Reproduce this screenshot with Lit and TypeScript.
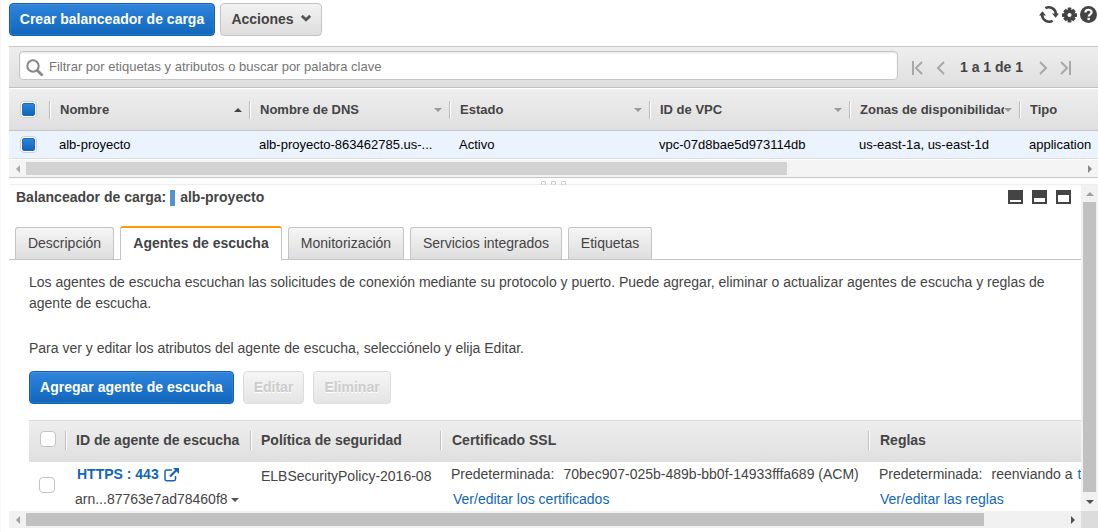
import { LitElement, html, css, svg } from "lit";
import { customElement } from "lit/decorators.js";

const columns = [
  { label: "Nombre", cell: "alb-proyecto", width: 200, sort: "up" },
  { label: "Nombre de DNS", cell: "alb-proyecto-863462785.us-...", width: 200, sort: "down" },
  { label: "Estado", cell: "Activo", width: 200, sort: "down" },
  { label: "ID de VPC", cell: "vpc-07d8bae5d973114db", width: 200, sort: "down" },
  { label: "Zonas de disponibilidad", cell: "us-east-1a, us-east-1d", width: 170, sort: "down" },
  { label: "Tipo", cell: "application", width: 79, sort: "" },
];

const chevron = (d: string) => html`<svg width="12" height="14" viewBox="0 0 12 14"><path d=${d} fill="none" stroke="#a8a8a8" stroke-width="2"/></svg>`;

@customElement("app-root")
export class AppRoot extends LitElement {
  static styles = css`
    :host { display: block; width: 1098px; height: 532px; overflow: hidden; background: #fff; color: #444;
      font: 14px/21px "Liberation Sans", Arial, sans-serif; }
    * { box-sizing: border-box; }
    svg { display: block; flex: none; }
    .page { height: 532px; padding-left: 8px; border-left: 1px solid #f7f7f7; display: flex; flex-direction: column; }
    .toolbar { height: 46px; flex: none; display: flex; align-items: flex-start; padding-top: 3px; }
    .btn { height: 33px; border-radius: 4px; border: 1px solid #c3c3c3; display: flex; align-items: center; justify-content: center;
      font-weight: bold; font-size: 14px; white-space: nowrap; color: #444; background: linear-gradient(#f2f2f2, #dedede); }
    .btn.primary { color: #fff; border-color: #1361ad; background: linear-gradient(#2e85dc, #1166bb);
      box-shadow: inset 0 1px 0 #4690dc, inset 0 0 0 1px rgba(60,140,220,.4); }
    .btn.off { color: #ccc; border-color: #dcdcdc; background: linear-gradient(#f5f5f5, #e5e5e5); text-shadow: 0 1px 0 #fff; }
    .create { width: 206px; margin-right: 5px; }
    .actions { width: 102px; gap: 7px; padding-bottom: 1px; }
    .actions svg { margin-bottom: 2px; }
    .tools { margin-left: auto; display: flex; align-items: center; gap: 3px; padding: 2px 1px 0 0; }
    .filter { height: 42px; flex: none; border-top: 1px solid #c6c6c6; border-bottom: 1px solid #c1c1c1; background: linear-gradient(#eee, #dfdfdf);
      display: flex; padding: 4px 0 0 10px; }
    .search { width: 879px; height: 29px; border: 1px solid #c6c6c6; border-radius: 4px; background: #fff; display: flex; align-items: center;
      padding: 1px 0 0 6px; gap: 5px; font-size: 13px; color: #757575; box-shadow: inset 0 1px 2px #e5e5e5; }
    .search svg { margin-top: 3px; }
    .pager { display: flex; align-items: center; height: 33px; padding-left: 13px; font-weight: bold; font-size: 14px; }
    .pager .prev { margin-left: 11px; margin-right: 14px; }
    .pager .next { margin-left: 14px; margin-right: 11px; }
    .thead { height: 43px; flex: none; border-top: 1px solid #fff; border-bottom: 1px solid #c6c6c6;
      background: linear-gradient(#eee, #dfdfdf); display: flex; align-items: center; }
    .check { width: 40px; flex: none; padding-left: 11px; display: flex; }
    .box { width: 16px; height: 16px; border: 1px solid #c4c4c4; border-radius: 4px; background: #fff; display: flex; padding: 1px; }
    .box.on { width: 17px; height: 17px; border-color: #d0d0d0; }
    .box.on::before { content: ""; flex: 1; border-radius: 2px; background: linear-gradient(#2e85dc, #1166bb); border: 1px solid #1a6cb8; }
    .thead .check, .row .check { padding-left: 11px; }
    .th { height: 18px; flex: none; display: flex; align-items: center; border-left: 1px solid #bbb; box-shadow: inset 1px 0 #fff;
      padding: 0 7px 0 10px; font-size: 13px; font-weight: bold; white-space: nowrap; }
    .th .label { flex: 1; min-width: 0; overflow: hidden; padding-bottom: 1px; }
    .row { height: 28px; flex: none; border-bottom: 1px solid #ddd; background: #eaf3fe; display: flex; align-items: center; color: #000; font-size: 13px; }
    .td { flex: none; padding: 0 0 1px 10px; white-space: nowrap; }
    .hbar { display: flex; align-items: center; flex: none; background: #f1f1f1; }
    .hbar.top { height: 19px; border-bottom: 1px solid #c6c6c6; border-top: 1px solid #fff; background: #f4f4f4; }
    .thumb { height: 13px; background: #c1c1c1; }
    .cap { width: 17px; flex: none; display: flex; justify-content: center; }
    .top .thumb { background: #d2d2d2; width: 761px; }
    .bottom { height: 17px; width: 1072px; }
    .bottom .thumb { width: 958px; }
    .hbar .cap:last-child { margin-left: auto; }
    .corner { width: 17px; height: 17px; background: #dcdcdc; }
    .splitter { height: 7px; flex: none; border-bottom: 1px solid #eee; display: flex; justify-content: center; align-items: flex-end; gap: 5px; }
    .dot { width: 5px; height: 4px; border: 1px solid #c8c8c8; border-bottom-color: #ddd; border-radius: 2px 2px 0 0; margin-bottom: -1px; }
    .lower { flex: none; height: 326px; display: flex; }
    .detail { width: 1072px; overflow: hidden; display: flex; flex-direction: column; }
    .vbar { width: 17px; background: #f1f1f1; display: flex; flex-direction: column; align-items: center; }
    .vcap { height: 17px; display: flex; align-items: center; }
    .vthumb { width: 13px; height: 290px; background: #c1c1c1; margin-bottom: 1px; }
    .titlebar { height: 25px; flex: none; display: flex; align-items: center; padding-left: 7px; font-weight: bold; }
    .mark { width: 5px; height: 16px; background: #4f94d0; margin: 0 5px 0 4px; }
    .panes { margin-left: auto; display: flex; gap: 9px; padding: 0 10px 1px 0; }
    .tabs { height: 50px; flex: none; display: flex; align-items: flex-end; border-bottom: 1px solid #c4c4c4; padding-left: 6px; gap: 6px; }
    .tab { height: 32px; border: 1px solid #c4c4c4; border-bottom: 0; border-radius: 3px 3px 0 0; background: linear-gradient(#f5f5f5, #dedede);
      display: flex; align-items: center; justify-content: center; white-space: nowrap; }
    .tab.sel { height: 34px; margin-bottom: -1px; background: #fff; border-top: 2px solid #f90; font-weight: bold; padding-bottom: 1px; }
    .t1 { width: 99px; } .t2 { width: 162px; } .t3 { width: 116px; } .t4 { width: 152px; } .t5 { width: 84px; }
    .copy { padding: 12px 20px 0; height: 111px; flex: none; }
    .copy p { margin: 0; white-space: nowrap; }
    .copy p + p { margin-top: 24px; }
    .acts { flex: none; display: flex; padding-left: 20px; height: 49px; }
    .add { width: 205px; margin-right: 9px; } .edit { width: 61px; margin-right: 9px; } .del { width: 78px; }
    .lhead, .lrow { margin-left: 20px; width: 1052px; display: flex; flex: none; }
    .lhead { height: 42px; border-top: 1px solid #d8d8d8; background: linear-gradient(#eee, #dfdfdf); align-items: center; font-weight: bold; padding-bottom: 2px; }
    .lhead .check { width: 36px; padding-bottom: 4px; } .lrow .check { width: 36px; padding: 15px 0 0 10px; }
    .lh { height: 19px; line-height: 19px; flex: none; border-left: 1px solid #c0c0c0; box-shadow: inset 1px 0 #fff; padding-left: 11px; white-space: nowrap; }
    .lh.w1 { padding-left: 10px; } .lh.w2 { padding-left: 10px; }
    .lrow { height: 49px; }
    .lc { flex: none; padding-left: 11px; white-space: nowrap; overflow: hidden; }
    .lc.w1 { padding-left: 10px; }
    .w1 { width: 185px; } .w2 { width: 190px; } .w3 { width: 428px; } .w4 { width: 213px; }
    .ln { height: 25px; display: flex; align-items: center; }
    .pol { padding-top: 4px; }
    .blue { color: #1166bb; }
    .ind { padding-left: 2px; }
    .ind1 { padding-left: 1px; }
    .gap { width: 9px; flex: none; }
    .gap.sm { width: 5px; }
  `;

  private arrow(dir: string, color: string) {
    const d: Record<string, string> = { up: "M0 5L4 1L8 5Z", down: "M0 1L4 5L8 1Z", left: "M6 0V8L2 4Z", right: "M2 0V8L6 4Z" };
    const flat = dir === "up" || dir === "down";
    return html`<svg width="8" height=${flat ? 6 : 8} viewBox="0 0 8 ${flat ? 6 : 8}"><path d=${d[dir]} fill=${color}/></svg>`;
  }

  private pane(y: number) {
    return html`<svg width="15" height="14"><path d="M0 0H15V14H0Z" fill="#444"/>${svg`<rect x="2" y=${y} width="11" height=${12 - y} fill="#fff"/>`}</svg>`;
  }

  render() {
    return html`<div class="page">
      <div class="toolbar">
        <div class="btn primary create">Crear balanceador de carga</div>
        <div class="btn actions"><span>Acciones</span>
          <svg width="10" height="7" viewBox="0 0 10 7"><path d="M0.8 0.8L5 4.8L9.2 0.8" fill="none" stroke="#555" stroke-width="2.8"/></svg></div>
        <div class="tools">
          <svg width="20" height="19" viewBox="0 0 20 19"><g fill="none" stroke="#444" stroke-width="2.6"><path d="M6.4 3.1A7.3 7.3 0 0 1 17 9"/><path d="M13.6 15.9A7.3 7.3 0 0 1 3 10"/></g><path d="M13 8.4H20L16.7 12.8ZM0 10.6H7L3.3 6.2Z" fill="#444"/></svg>
          <svg width="15" height="16" viewBox="0 0 16 16"><g fill="#444"><rect x="6" y="0" width="4" height="16" rx=".6"/><rect x="0" y="6" width="16" height="4" rx=".6"/><rect x="6" y="0.4" width="4" height="15.2" rx=".6" transform="rotate(45 8 8)"/><rect x="6" y="0.4" width="4" height="15.2" rx=".6" transform="rotate(-45 8 8)"/></g><circle cx="8" cy="8" r="4.1" fill="#fff" stroke="#444" stroke-width="3.8"/></svg>
          <svg width="17" height="17" viewBox="0 0 17 17"><circle cx="8.5" cy="8.5" r="8.5" fill="#444"/><path d="M5.4 6.5C5.4 2.8 11.6 2.9 11.6 6.3C11.6 8.4 8.7 8.3 8.7 10.5" fill="none" stroke="#fff" stroke-width="2.2"/><rect x="7.5" y="11.8" width="2.3" height="2.3" fill="#fff"/></svg>
        </div>
      </div>
      <div class="filter">
        <div class="search">
          <svg width="18" height="18" viewBox="0 0 18 18"><circle cx="7" cy="7" r="5.7" fill="none" stroke="#888" stroke-width="2"/><path d="M11.3 11.5L16.5 16.5" stroke="#888" stroke-width="2.8"/></svg>
          <span>Filtrar por etiquetas y atributos o buscar por palabra clave</span>
        </div>
        <div class="pager">
          ${chevron("M2 0V14M11 1L5 7L11 13")}<span class="prev">${chevron("M10 1L4 7L10 13")}</span>
          <span>1 a 1 de 1</span><span class="next">${chevron("M3 1L9 7L3 13")}</span>${chevron("M1 1L7 7L1 13M10 0V14")}
        </div>
      </div>
      <div class="thead">
        <div class="check"><div class="box on"></div></div>
        ${columns.map(c => html`<div class="th" style="width:${c.width}px"><span class="label">${c.label}</span>${c.sort ? this.arrow(c.sort, c.sort === "up" ? "#444" : "#999") : ""}</div>`)}
      </div>
      <div class="row">
        <div class="check"><div class="box on"></div></div>
        ${columns.map(c => html`<div class="td" style="width:${c.width}px">${c.cell}</div>`)}
      </div>
      <div class="hbar top"><div class="cap">${this.arrow("left", "#aaa")}</div><div class="thumb"></div><div class="cap">${this.arrow("right", "#888")}</div></div>
      <div class="splitter"><i class="dot"></i><i class="dot"></i><i class="dot"></i></div>
      <div class="lower">
        <div class="detail">
          <div class="titlebar"><span>Balanceador de carga:</span><i class="mark"></i><span>alb-proyecto</span>
            <div class="panes">${this.pane(10)}${this.pane(8)}${this.pane(5)}</div></div>
          <div class="tabs">
            <div class="tab t1">Descripción</div><div class="tab sel t2">Agentes de escucha</div><div class="tab t3">Monitorización</div>
            <div class="tab t4">Servicios integrados</div><div class="tab t5">Etiquetas</div>
          </div>
          <div class="copy">
            <p>Los agentes de escucha escuchan las solicitudes de conexión mediante su protocolo y puerto. Puede agregar, eliminar o actualizar agentes de escucha y reglas de<br>agente de escucha.</p>
            <p>Para ver y editar los atributos del agente de escucha, selecciónelo y elija Editar.</p>
          </div>
          <div class="acts"><div class="btn primary add">Agregar agente de escucha</div><div class="btn off edit">Editar</div><div class="btn off del">Eliminar</div></div>
          <div class="lhead"><div class="check"><div class="box"></div></div>
            <div class="lh w1">ID de agente de escucha</div><div class="lh w2">Política de seguridad</div><div class="lh w3">Certificado SSL</div><div class="lh w4">Reglas</div></div>
          <div class="lrow"><div class="check"><div class="box"></div></div>
            <div class="lc w1"><div class="ln ind blue"><b>HTTPS : 443</b><span class="gap sm"></span>
                <svg width="15" height="14" viewBox="0 0 15 14"><path d="M8 2H2.5Q1 2 1 3.5V11Q1 12.7 2.5 12.7H10Q11.5 12.7 11.5 11V8" fill="none" stroke="#1166bb" stroke-width="1.5"/><path d="M6 8.5L12 2.5" stroke="#1166bb" stroke-width="2.2"/><path d="M9 0H15V6Z" fill="#1166bb"/></svg></div>
              <div class="ln">arn...87763e7ad78460f8&nbsp;${this.arrow("down", "#555")}</div></div>
            <div class="lc w2"><div class="ln pol">ELBSecurityPolicy-2016-08</div></div>
            <div class="lc w3"><div class="ln">Predeterminada:<span class="gap"></span>70bec907-025b-489b-bb0f-14933fffa689 (ACM)</div><div class="ln ind blue">Ver/editar los certificados</div></div>
            <div class="lc w4"><div class="ln">Predeterminada:<span class="gap"></span>reenviando a<span class="gap sm"></span><span class="blue">tg</span></div><div class="ln ind1 blue">Ver/editar las reglas</div></div>
          </div>
        </div>
        <div class="vbar"><div class="vcap">${this.arrow("up", "#a0a0a0")}</div><div class="vthumb"></div><div class="vcap">${this.arrow("down", "#505050")}</div></div>
      </div>
      <div class="hbar"><div class="hbar bottom"><div class="cap">${this.arrow("left", "#a0a0a0")}</div><div class="thumb"></div><div class="cap">${this.arrow("right", "#505050")}</div></div><div class="corner"></div></div>
    </div>`;
  }
}
